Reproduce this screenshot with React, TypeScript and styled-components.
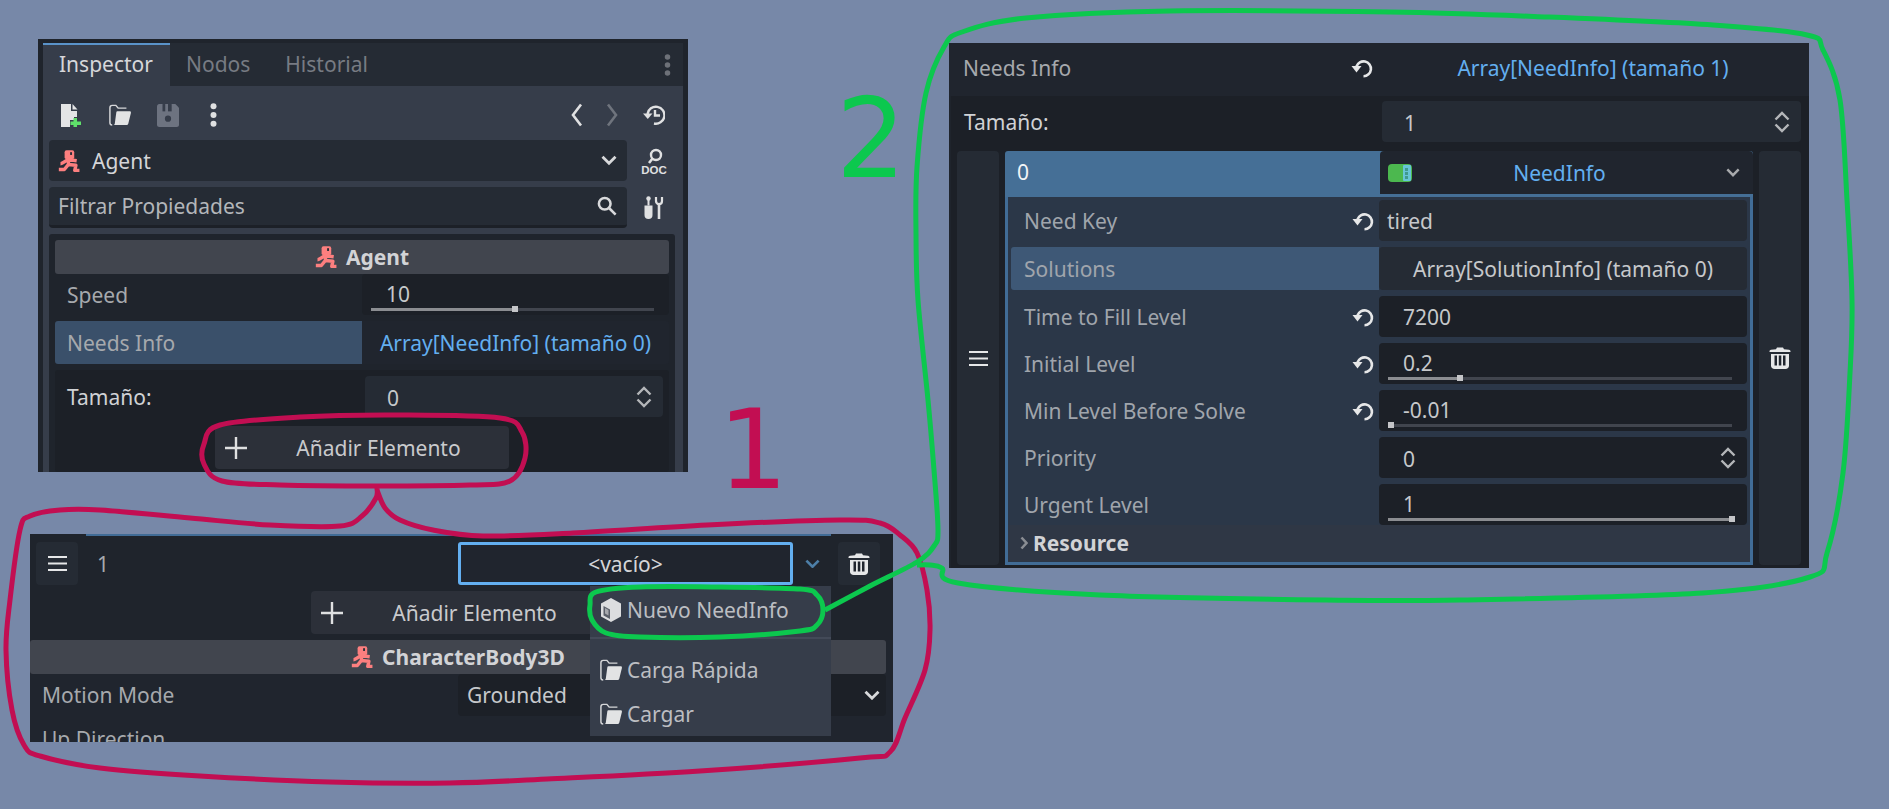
import React from "react";
import styled, { createGlobalStyle } from "styled-components";

const Global = createGlobalStyle`
  html, body { margin: 0; padding: 0; background: #7788a8; }
  * { box-sizing: border-box; }
`;

const Canvas = styled.div`
  position: relative;
  width: 1889px;
  height: 809px;
  overflow: hidden;
  background: #7788a8;
  font-family: "Noto Sans", sans-serif;
  font-size: 21px;
  color: #d4d5d8;
`;

const Window = styled.section<{ $x: number; $y: number; $w: number; $h: number }>`
  position: absolute;
  left: ${(p) => p.$x}px;
  top: ${(p) => p.$y}px;
  width: ${(p) => p.$w}px;
  height: ${(p) => p.$h}px;
  overflow: hidden;
  background: #1f242c;
`;

/* ---------- inspector dock ---------- */
const Dock = styled.div`
  margin: 4px 5px 0;
  height: 429px;
  display: flex;
  flex-direction: column;
  background: #363d4a;
  border-radius: 3px 3px 0 0;
`;
const TabBar = styled.div`
  height: 43px;
  display: flex;
  align-items: stretch;
  background: #252b34;
  padding-right: 12px;
`;
const Tab = styled.div<{ $active?: boolean }>`
  padding: 0 ${(p) => (p.$active ? 17 : 19)}px 3px 16px;
  display: flex;
  align-items: center;
  background: ${(p) => (p.$active ? "#363d4a" : "transparent")};
  border-top: 2px solid ${(p) => (p.$active ? "#5a93c9" : "transparent")};
  color: ${(p) => (p.$active ? "#d6d7da" : "#777b83")};
`;
const Spacer = styled.div`
  flex: 1;
`;
const KebabSlot = styled.div`
  display: flex;
  align-items: center;
  color: #7f838a;
`;
const Toolbar = styled.div`
  height: 54px;
  display: flex;
  align-items: center;
  padding: 4px 18px 0 18px;
`;
const ToolIcon = styled.div<{ $w?: number; $ml?: number }>`
  width: ${(p) => p.$w ?? 48}px;
  margin-left: ${(p) => p.$ml ?? 0}px;
  display: flex;
  justify-content: flex-start;
  align-items: center;
`;
const InputRow = styled.div`
  display: grid;
  grid-template-columns: 578px 54px;
  padding-left: 6px;
  margin-bottom: 6px;
  height: 41px;
`;
const Drop = styled.div<{ $sunken?: boolean }>`
  display: flex;
  align-items: center;
  gap: 12px;
  padding: 0 10px 0 9px;
  background: #252b34;
  border-radius: 4px;
  border-bottom: ${(p) => (p.$sunken ? "3px solid #1c2027" : "0")};
  color: ${(p) => (p.$sunken ? "#b3b6ba" : "#d4d5d8")};
`;
const SideIcon = styled.div`
  display: flex;
  align-items: center;
  justify-content: center;
`;
const SectionBox = styled.div`
  margin-left: 6px;
  width: 626px;
  padding: 6px 6px 0;
  background: #1f242c;
  flex: 1;
  border-radius: 3px 3px 0 0;
`;
const ClassHeader = styled.div<{ $w?: number; $mt?: number }>`
  height: 34px;
  width: ${(p) => (p.$w ? `${p.$w}px` : "auto")};
  margin-top: ${(p) => p.$mt ?? 0}px;
  display: flex;
  justify-content: center;
  align-items: center;
  gap: 9px;
  background: #41454e;
  border-radius: 3px;
  font-weight: 700;
  color: #d2d3d6;
`;
const PropRow = styled.div<{ $hl?: boolean; $mb?: number }>`
  display: grid;
  grid-template-columns: 307px 307px;
  height: ${(p) => (p.$hl ? 43 : 41)}px;
  margin-bottom: ${(p) => p.$mb ?? 6}px;
`;
const PropLabel = styled.div<{ $hl?: boolean }>`
  display: flex;
  align-items: center;
  padding-left: 12px;
  color: #a6a9ad;
  border-radius: 3px 0 0 3px;
  background: ${(p) => (p.$hl ? "#3a506a" : "transparent")};
`;
const SliderField = styled.div<{ $ml?: number; $mr?: number }>`
  background: #1c2027;
  border-radius: 4px;
  height: 41px;
  display: flex;
  flex-direction: column;
  padding-left: ${(p) => p.$ml ?? 9}px;
  padding-right: ${(p) => p.$mr ?? 15}px;
`;
const SliderValue = styled.div<{ $pad?: number }>`
  height: 33px;
  line-height: 40px;
  padding-left: ${(p) => p.$pad ?? 15}px;
  color: #c6c8cb;
`;
const Track = styled.div`
  position: relative;
  height: 3px;
  margin-top: 1px;
  background: #41454e;
`;
const TrackFill = styled.div<{ $pct: number }>`
  position: absolute;
  left: 0;
  top: 0;
  bottom: 0;
  width: ${(p) => p.$pct}%;
  background: #8b8d91;
`;
const Thumb = styled.div<{ $pct: number }>`
  position: absolute;
  left: ${(p) => p.$pct}%;
  top: -2px;
  width: 6px;
  height: 6px;
  margin-left: -3px;
  background: #c4c5c8;
`;
const LinkValue = styled.div`
  display: flex;
  align-items: center;
  justify-content: center;
  color: #63aff0;
  background: #20252e;
  border-radius: 0 3px 3px 0;
`;
const SubPanel = styled.div`
  height: 102px;
  background: #1c2027;
  border-radius: 3px;
  padding: 6px 6px 0 0;
`;
const SizeRow = styled.div<{ $col: number }>`
  display: grid;
  grid-template-columns: ${(p) => p.$col}px 1fr;
  height: 41px;
`;
const SizeLabel = styled.div<{ $pl: number }>`
  display: flex;
  align-items: center;
  padding-left: ${(p) => p.$pl}px;
  color: #d0d2d5;
`;
const Spin = styled.div<{ $pl?: number; $bg?: string }>`
  display: flex;
  align-items: center;
  justify-content: space-between;
  padding: 0 11px 0 ${(p) => p.$pl ?? 22}px;
  border-radius: 4px;
  background: ${(p) => p.$bg ?? "#252b34"};
  color: #c6c8cb;
  span {
    padding-top: 2px;
  }
`;
const AddWrap = styled.div<{ $pl: number; $mt: number }>`
  padding-left: ${(p) => p.$pl}px;
  margin-top: ${(p) => p.$mt}px;
`;
const AddButton = styled.div`
  width: 294px;
  height: 43px;
  display: grid;
  grid-template-columns: 32px 1fr;
  align-items: center;
  padding-left: 10px;
  background: #2c3039;
  border-radius: 4px;
  color: #c9cacd;
  text-align: center;
  span {
    padding-right: 9px;
  }
`;

/* ---------- second crop ---------- */
const ListTopLine = styled.div`
  height: 2px;
  margin: 0 62px 6px 56px;
  background: #416c96;
`;
const ElementRow = styled.div`
  display: grid;
  grid-template-columns: 42px 380px 335px 38px 49px;
  height: 43px;
  margin-left: 6px;
`;
const Handle = styled.div`
  display: flex;
  align-items: center;
  justify-content: center;
  background: #252b34;
  border-radius: 4px;
`;
const IndexLabel = styled.div`
  display: flex;
  align-items: center;
  padding-left: 19px;
  color: #a6a9ad;
`;
const EmptyPick = styled.div`
  display: flex;
  align-items: center;
  justify-content: center;
  background: #20252e;
  border: 3px solid #63aff0;
  border-radius: 3px;
  color: #d4d5d8;
`;
const ChevronSlot = styled.div`
  display: flex;
  align-items: center;
  justify-content: center;
  color: #4d7fa8;
`;
const TrashSlot = styled.div`
  margin-left: 7px;
  width: 42px;
  display: flex;
  align-items: center;
  justify-content: center;
  background: #252b34;
  border-radius: 4px;
`;
const MotionRow = styled.div`
  display: grid;
  grid-template-columns: 428px 428px;
  height: 42px;
  background: #20252e;
`;
const MotionLabel = styled.div`
  display: flex;
  align-items: center;
  padding-left: 12px;
  color: #a6a9ad;
`;
const MotionSelect = styled.div`
  display: flex;
  align-items: center;
  justify-content: space-between;
  padding: 0 6px 0 9px;
  background: #1c2027;
  border-radius: 4px;
  color: #c6c8cb;
`;
const UpRow = styled.div`
  padding: 9px 0 0 12px;
  color: #a6a9ad;
  background: #20252e;
  height: 40px;
`;
const CropBody = styled.div`
  background: #20252e;
`;
const Popup = styled.div`
  position: absolute;
  left: 560px;
  top: 52px;
  width: 241px;
  height: 150px;
  background: #363d4a;
  display: flex;
  flex-direction: column;
  color: #bcbec2;
`;
const MenuItem = styled.div<{ $h: number }>`
  height: ${(p) => p.$h}px;
  display: flex;
  align-items: center;
  gap: 5px;
  padding: 0 0 4px 10px;
`;
const MenuSep = styled.div`
  height: 2px;
  background: #434a58;
  margin-bottom: 8px;
`;

/* ---------- third crop ---------- */
const TopRow = styled.div`
  height: 53px;
  display: grid;
  grid-template-columns: 432px 1fr;
  background: #20252e;
  padding-bottom: 3px;
`;
const TopLabel = styled.div`
  display: flex;
  align-items: center;
  justify-content: space-between;
  padding: 0 8px 0 14px;
  color: #a6a9ad;
`;
const TopValue = styled.div`
  display: flex;
  align-items: center;
  justify-content: center;
  padding-right: 4px;
  color: #63aff0;
`;
const TopSub = styled.div`
  margin-left: 2px;
  height: 472px;
  background: #1c2027;
  padding: 5px 8px 0 6px;
`;
const ItemRow = styled.div`
  display: grid;
  grid-template-columns: 42px 748px 42px;
  column-gap: 6px;
  height: 414px;
  margin-top: 9px;
`;
const SideBar = styled.div`
  display: flex;
  align-items: center;
  justify-content: center;
  background: #252b34;
  border-radius: 4px;
`;
const ItemMain = styled.div`
  display: flex;
  flex-direction: column;
`;
const ItemHead = styled.div`
  height: 46px;
  display: grid;
  grid-template-columns: 375px 373px;
  background: #456f96;
  border-radius: 3px 3px 0 0;
`;
const ItemIndex = styled.div`
  display: flex;
  align-items: center;
  padding: 0 0 4px 12px;
  color: #f2f4f6;
`;
const ResPick = styled.div`
  height: 43px;
  display: grid;
  grid-template-columns: 32px 1fr 54px;
  align-items: center;
  padding-left: 8px;
  background: #20252e;
  border-radius: 4px 4px 0 0;
  color: #63aff0;
  text-align: center;
  svg:last-child {
    justify-self: end;
    margin-right: 13px;
  }
`;
const ItemBox = styled.div`
  flex: 1;
  background: #2b3748;
  border: solid #416c96;
  border-width: 0 3px 3px;
  padding-top: 3px;
  display: flex;
  flex-direction: column;
  gap: 6px;
`;
const InnerRow = styled.div<{ $tall?: boolean }>`
  display: grid;
  grid-template-columns: 371px 368px;
  height: ${(p) => (p.$tall ? 43 : 41)}px;
`;
const InnerLabel = styled.div<{ $hl?: boolean }>`
  display: flex;
  align-items: center;
  justify-content: space-between;
  padding: 0 5px 0 ${(p) => (p.$hl ? 13 : 16)}px;
  color: #a0a5ac;
  background: ${(p) => (p.$hl ? "#3e5876" : "transparent")};
  margin-left: ${(p) => (p.$hl ? 3 : 0)}px;
  border-radius: 3px 0 0 3px;
`;
const TextField = styled.div<{ $center?: boolean; $bg?: string }>`
  display: flex;
  align-items: center;
  justify-content: ${(p) => (p.$center ? "center" : "flex-start")};
  padding-left: ${(p) => (p.$center ? 0 : 8)}px;
  background: ${(p) => p.$bg ?? "#252b34"};
  border-radius: 4px;
  color: #c6c8cb;
`;
const NumField = styled(TextField)`
  padding-left: 24px;
  background: #1c2027;
`;
const ResourceBar = styled.div`
  height: 36px;
  margin-top: -6px;
  display: flex;
  align-items: center;
  gap: 5px;
  padding-left: 12px;
  background: #2f3745;
  font-weight: 700;
  color: #d2d3d6;
`;

/* ---------- annotation ---------- */
const Scribble = styled.svg`
  position: absolute;
  inset: 0;
  width: 1889px;
  height: 809px;
  pointer-events: none;
`;
const Numeral = styled.div<{ $x: number; $y: number; $c: string }>`
  position: absolute;
  left: ${(p) => p.$x}px;
  top: ${(p) => p.$y}px;
  font-family: "DejaVu Sans", sans-serif;
  font-size: 110px;
  line-height: 110px;
  color: ${(p) => p.$c};
`;

/* ---------- icons ---------- */
const AgentIcon = ({ s = 22 }: { s?: number }) => (
  <svg width={s} height={s} viewBox="0 0 16 16" fill="none" stroke="#fc7f7f" strokeWidth="2.5" strokeLinejoin="round">
    <rect x="4.8" y="0.2" width="7" height="6.4" rx="1.4" fill="#fc7f7f" stroke="none" />
    <rect x="8.8" y="1.6" width="1.4" height="2" fill="#2a2f38" stroke="none" />
    <path d="M7.600 5v5.500M1.800 10c2 0 3-2 5.800-3l6 .8M7.600 10.500l-3 3.700H.6M7.600 10.500l5.400.6-.8 3.700h3.400" />
  </svg>
);
const NewFileIcon = () => (
  <svg width="22" height="23" viewBox="0 0 22 23">
    <path d="M0 0h10v7h6v6h-3v3H9v7H0z" fill="#e4e5e6" />
    <path d="M11.500 0 16.500 5.500h-5z" fill="#e4e5e6" />
    <path d="M12.500 14h3.500v3.500h4V21h-4v2h-3.500v-2h-3v-3.500h3z" fill="#5fe06a" />
  </svg>
);
const FolderIcon = ({ s = 22 }: { s?: number }) => (
  <svg width={s} height={s} viewBox="0 0 24 24">
    <path d="M3.500 23C2 23 1 22 1 20.500V4C1 2.500 2 1.500 3.500 1.500h4l2.500 3h9" fill="none" stroke="#d6d7d9" strokeWidth="1.600" />
    <path d="M9 8h13.500c1 0 1.600.8 1.400 1.700L21 21.500c-.3 1-1 1.500-2 1.500H4.500c1 0 1.600-.6 1.800-1.500L8 9c.1-.6.5-1 1-1z" fill="#e2e3e4" />
  </svg>
);
const SaveIcon = () => (
  <svg width="22" height="23" viewBox="0 0 24 25">
    <path d="M2.500 0H20L24 4V22.500c0 1.400-1.100 2.500-2.500 2.500h-19C1.100 25 0 23.900 0 22.500V2.500C0 1.100 1.100 0 2.500 0z" fill="#6d7380" />
    <rect x="6" y="0" width="3" height="8" fill="#363d4a" />
    <rect x="12" y="0" width="4" height="8" fill="#363d4a" />
    <circle cx="12" cy="16" r="3.400" fill="#363d4a" />
  </svg>
);
const Kebab = ({ c = "#e0e1e2", h = 24 }: { c?: string; h?: number }) => (
  <svg width="7" height={h} viewBox="0 0 7 24" fill={c}>
    <circle cx="3.500" cy="3.200" r="3" />
    <circle cx="3.500" cy="12" r="3" />
    <circle cx="3.500" cy="20.800" r="3" />
  </svg>
);
const ArrowLeft = () => (
  <svg width="14" height="24" viewBox="0 0 14 24" fill="none" stroke="#e0e1e2" strokeWidth="2.600">
    <path d="M11 1.500 3 12l8 10.500" />
  </svg>
);
const ArrowRight = () => (
  <svg width="14" height="24" viewBox="0 0 14 24" fill="none" stroke="#6f747d" strokeWidth="2.600">
    <path d="M3 1.500 11 12l-8 10.500" />
  </svg>
);
const HistoryIcon = () => (
  <svg width="22" height="20" viewBox="0 0 22 20" fill="none" stroke="#e0e1e2" strokeWidth="2.400">
    <path d="M4.500 9A8.500 8.500 0 1 1 11 18.500" />
    <path d="M12 5v5.500h5" />
    <path d="M0 8.500h9.500l-4.750 5.500z" fill="#e0e1e2" stroke="none" />
  </svg>
);
const DocIcon = () => (
  <svg width="26" height="26" viewBox="0 0 26 26" fill="none">
    <circle cx="15" cy="7" r="5" stroke="#e0e1e2" strokeWidth="2.400" />
    <path d="M11.500 10.500 8 15" stroke="#e0e1e2" strokeWidth="2.600" />
    <text x="13" y="25.500" textAnchor="middle" fontFamily="Liberation Sans" fontWeight="700" fontSize="11.500" fill="#e0e1e2">DOC</text>
  </svg>
);
const SearchIcon = () => (
  <svg width="20" height="20" viewBox="0 0 22 22" fill="none" stroke="#d8d9db" strokeWidth="2.800">
    <circle cx="8.500" cy="8.500" r="6.400" />
    <path d="M13.500 13.500 20.500 20.500" />
  </svg>
);
const ToolsIcon = () => (
  <svg width="20" height="23" viewBox="0 0 20 23">
    <circle cx="4.500" cy="2.500" r="2.200" fill="#e0e1e2" />
    <path d="M3.500 3.500h2v6h-2z" fill="#e0e1e2" />
    <path d="M0.500 9.500h8V19a4 4 0 0 1-8 0z" fill="#e0e1e2" />
    <path d="M12 1v4c0 2 1.300 3.200 3 3.200S18 7 18 5V1" fill="none" stroke="#e0e1e2" strokeWidth="2.200" />
    <path d="M13.700 7.500h2.600V23h-2.600z" fill="#e0e1e2" />
  </svg>
);
const DownChevron = ({ c = "#d8d9db", w = 16 }: { c?: string; w?: number }) => (
  <svg width={w} height={w * 0.65} viewBox="0 0 16 10" fill="none" stroke={c} strokeWidth="2.800">
    <path d="M1.500 1.500 8 8l6.500-6.500" />
  </svg>
);
const SpinIcon = () => (
  <svg width="16" height="22" viewBox="0 0 16 22" fill="none" stroke="#b4b6b9" strokeWidth="2.400">
    <path d="M1.500 8.500 8 2l6.500 6.500M1.500 13.500 8 20l6.500-6.500" />
  </svg>
);
const PlusIcon = () => (
  <svg width="22" height="22" viewBox="0 0 22 22" stroke="#dfe0e1" strokeWidth="2.400">
    <path d="M11 0v22M0 11h22" />
  </svg>
);
const Burger = () => (
  <svg width="19" height="15" viewBox="0 0 19 15" stroke="#e6e7e8" strokeWidth="2">
    <path d="M0 1h19M0 7.500h19M0 14h19" />
  </svg>
);
const TrashIcon = () => (
  <svg width="22" height="22" viewBox="0 0 22 22">
    <path d="M0.500 4.500c0-1 .7-1.600 1.500-1.700L7 2.200 8 .5h6l1 1.700 5 .6c.8.100 1.500.7 1.500 1.700v.5H.500z" fill="#e6e7e8" />
    <path d="M2 7h18v11.500c0 2-1.500 3.500-3.500 3.500h-11C3.500 22 2 20.500 2 18.500z" fill="#e6e7e8" />
    <path d="M5.500 8.500h2.500v10H5.500zM9.800 8.500h2.500v10H9.800zM14 8.500h2.500v10H14z" fill="#20252e" />
  </svg>
);
const ResetIcon = () => (
  <svg width="22" height="20" viewBox="0 0 22 20" fill="none" stroke="#e6e7e8" strokeWidth="2.600">
    <path d="M5.500 8.500A7.400 7.400 0 1 1 12.500 18.200" />
    <path d="M0.500 8h10l-5 6.500z" fill="#e6e7e8" stroke="none" />
  </svg>
);
const CubeIcon = () => (
  <svg width="22" height="24" viewBox="0 0 22 24">
    <path d="M11 0l10 5.500v13L11 24 1 18.500v-13z" fill="#dcdddf" />
    <path d="M3.500 8 10 11.500V21l-6.500-3.500z" fill="#5a5f69" />
    <path d="M5 10l3.500 2v5.500L5 15.500z" fill="#a6a8ad" />
  </svg>
);
const ResIcon = () => (
  <svg width="24" height="18" viewBox="0 0 24 18">
    <rect x="0" y="0" width="24" height="18" rx="4" fill="#4cb84f" />
    <rect x="15" y="1" width="8" height="16" rx="1" fill="#67c5d6" />
    <rect x="17" y="4" width="3" height="3" fill="#3f9a8e" />
    <rect x="17" y="8" width="3" height="3" fill="#3f9a8e" />
    <rect x="17" y="12" width="3" height="3" fill="#3f9a8e" />
  </svg>
);
const Caret = () => (
  <svg width="8" height="14" viewBox="0 0 8 14" fill="none" stroke="#8a8d93" strokeWidth="2.600">
    <path d="M1.500 1.500 6.500 7l-5 5.500" />
  </svg>
);

/* smooth pen stroke through hand-traced points */
type P = [number, number];
const smooth = (pts: P[], close = false) => {
  const at = (i: number): P =>
    close ? pts[(i + pts.length) % pts.length] : pts[Math.max(0, Math.min(pts.length - 1, i))];
  const n = close ? pts.length : pts.length - 1;
  let d = `M${pts[0][0]} ${pts[0][1]}`;
  for (let i = 0; i < n; i++) {
    const [p0, p1, p2, p3] = [at(i - 1), at(i), at(i + 1), at(i + 2)];
    const c1 = [p1[0] + (p2[0] - p0[0]) / 6, p1[1] + (p2[1] - p0[1]) / 6];
    const c2 = [p2[0] - (p3[0] - p1[0]) / 6, p2[1] - (p3[1] - p1[1]) / 6];
    d += `C${c1[0].toFixed(1)} ${c1[1].toFixed(1)} ${c2[0].toFixed(1)} ${c2[1].toFixed(1)} ${p2[0]} ${p2[1]}`;
  }
  return d + (close ? "Z" : "");
};

const RED = "#c20e52";
const GREEN = "#0cc84e";

const redOval = smooth(
  [[204, 444], [220, 425], [300, 417], [400, 415], [500, 418], [522, 432], [525, 458], [510, 481], [470, 485], [377, 486], [280, 485], [222, 481], [204, 464]],
  true
);
const redBig = smooth([
  [377, 488], [376, 498], [362, 516], [340, 526], [270, 525], [190, 518], [100, 510], [60, 510], [30, 516], [20, 530], [10, 600], [6, 650], [12, 710], [24, 745], [40, 756], [100, 768], [200, 776], [330, 782], [450, 783], [547, 779], [700, 771], [860, 758], [890, 752], [905, 718], [925, 670], [930, 630], [927, 590], [917, 553], [900, 535], [880, 523], [840, 520], [707, 525], [573, 533], [483, 536], [433, 530], [400, 520], [385, 508], [377, 490],
]);
const greenOval = smooth(
  [[596, 592], [640, 587], [720, 587], [800, 589], [817, 595], [823, 610], [817, 625], [800, 631], [720, 637], [640, 637], [606, 633], [592, 620], [590, 605]],
  true
);
const greenBig = smooth([
  [825, 610], [870, 586], [917, 562], [934, 546], [938, 530], [934, 470], [928, 400], [918, 300], [916, 233], [917, 167], [926, 93], [944, 47], [962, 32], [1026, 18], [1169, 11], [1390, 12], [1547, 17], [1713, 25], [1807, 35], [1823, 50], [1840, 100], [1847, 200], [1852, 300], [1850, 373], [1843, 473], [1827, 553], [1810, 577], [1703, 593], [1460, 600], [1326, 600], [1100, 595], [958, 583], [942, 568], [930, 565], [917, 565],
]);

export default function App() {
  return (
    <Canvas>
      <Global />
      <Window $x={38} $y={39} $w={650} $h={433}>
        <Dock>
          <TabBar>
            <Tab $active>Inspector</Tab>
            <Tab>Nodos</Tab>
            <Tab>Historial</Tab>
            <Spacer />
            <KebabSlot>
              <Kebab c="#6d7178" h={22} />
            </KebabSlot>
          </TabBar>
          <Toolbar>
            <ToolIcon><NewFileIcon /></ToolIcon>
            <ToolIcon><FolderIcon /></ToolIcon>
            <ToolIcon><SaveIcon /></ToolIcon>
            <ToolIcon $ml={5}><Kebab /></ToolIcon>
            <Spacer />
            <ToolIcon $w={35}><ArrowLeft /></ToolIcon>
            <ToolIcon $w={38}><ArrowRight /></ToolIcon>
            <ToolIcon $w={22}><HistoryIcon /></ToolIcon>
          </Toolbar>
          <InputRow>
            <Drop>
              <AgentIcon />
              Agent
              <Spacer />
              <DownChevron />
            </Drop>
            <SideIcon><DocIcon /></SideIcon>
          </InputRow>
          <InputRow>
            <Drop $sunken>
              Filtrar Propiedades
              <Spacer />
              <SearchIcon />
            </Drop>
            <SideIcon><ToolsIcon /></SideIcon>
          </InputRow>
          <SectionBox>
            <ClassHeader>
              <AgentIcon />
              Agent
            </ClassHeader>
            <PropRow>
              <PropLabel>Speed</PropLabel>
              <SliderField>
                <SliderValue>10</SliderValue>
                <Track>
                  <TrackFill $pct={51} />
                  <Thumb $pct={51} />
                </Track>
              </SliderField>
            </PropRow>
            <PropRow $hl>
              <PropLabel $hl>Needs Info</PropLabel>
              <LinkValue>Array[NeedInfo] (tamaño 0)</LinkValue>
            </PropRow>
            <SubPanel>
              <SizeRow $col={310}>
                <SizeLabel $pl={12}>Tamaño:</SizeLabel>
                <Spin><span>0</span><SpinIcon /></Spin>
              </SizeRow>
              <AddWrap $pl={160} $mt={9}>
                <AddButton><PlusIcon /><span>Añadir Elemento</span></AddButton>
              </AddWrap>
            </SubPanel>
          </SectionBox>
        </Dock>
      </Window>

      <Window $x={30} $y={534} $w={863} $h={208}>
        <ListTopLine />
        <ElementRow>
          <Handle><Burger /></Handle>
          <IndexLabel>1</IndexLabel>
          <EmptyPick>&lt;vacío&gt;</EmptyPick>
          <ChevronSlot><DownChevron c="#4d7fa8" w={15} /></ChevronSlot>
          <TrashSlot><TrashIcon /></TrashSlot>
        </ElementRow>
        <AddWrap $pl={281} $mt={6}>
          <AddButton><PlusIcon /><span>Añadir Elemento</span></AddButton>
        </AddWrap>
        <CropBody>
          <ClassHeader $mt={6} $w={856}>
            <AgentIcon />
            CharacterBody3D
          </ClassHeader>
          <MotionRow>
            <MotionLabel>Motion Mode</MotionLabel>
            <MotionSelect>Grounded<DownChevron /></MotionSelect>
          </MotionRow>
          <UpRow>Up Direction</UpRow>
        </CropBody>
        <Popup>
          <MenuItem $h={51}><CubeIcon />Nuevo NeedInfo</MenuItem>
          <MenuSep />
          <MenuItem $h={50}><FolderIcon />Carga Rápida</MenuItem>
          <MenuItem $h={37}><FolderIcon />Cargar</MenuItem>
        </Popup>
      </Window>

      <Window $x={949} $y={43} $w={860} $h={525}>
        <TopRow>
          <TopLabel>Needs Info<ResetIcon /></TopLabel>
          <TopValue>Array[NeedInfo] (tamaño 1)</TopValue>
        </TopRow>
        <TopSub>
          <SizeRow $col={425}>
            <SizeLabel $pl={7}>Tamaño:</SizeLabel>
            <Spin><span>1</span><SpinIcon /></Spin>
          </SizeRow>
          <ItemRow>
            <SideBar><Burger /></SideBar>
            <ItemMain>
              <ItemHead>
                <ItemIndex>0</ItemIndex>
                <ResPick><ResIcon /><span>NeedInfo</span><DownChevron c="#a8aaad" w={14} /></ResPick>
              </ItemHead>
              <ItemBox>
                <InnerRow>
                  <InnerLabel>Need Key<ResetIcon /></InnerLabel>
                  <TextField>tired</TextField>
                </InnerRow>
                <InnerRow $tall>
                  <InnerLabel $hl>Solutions</InnerLabel>
                  <TextField $center>Array[SolutionInfo] (tamaño 0)</TextField>
                </InnerRow>
                <InnerRow>
                  <InnerLabel>Time to Fill Level<ResetIcon /></InnerLabel>
                  <NumField>7200</NumField>
                </InnerRow>
                <InnerRow>
                  <InnerLabel>Initial Level<ResetIcon /></InnerLabel>
                  <SliderField><SliderValue>0.2</SliderValue><Track><TrackFill $pct={21} /><Thumb $pct={21} /></Track></SliderField>
                </InnerRow>
                <InnerRow>
                  <InnerLabel>Min Level Before Solve<ResetIcon /></InnerLabel>
                  <SliderField><SliderValue>-0.01</SliderValue><Track><TrackFill $pct={0} /><Thumb $pct={1} /></Track></SliderField>
                </InnerRow>
                <InnerRow>
                  <InnerLabel>Priority</InnerLabel>
                  <Spin $bg="#1c2027" $pl={24}><span>0</span><SpinIcon /></Spin>
                </InnerRow>
                <InnerRow>
                  <InnerLabel>Urgent Level</InnerLabel>
                  <SliderField><SliderValue>1</SliderValue><Track><TrackFill $pct={100} /><Thumb $pct={100} /></Track></SliderField>
                </InnerRow>
                <ResourceBar><Caret />Resource</ResourceBar>
              </ItemBox>
            </ItemMain>
            <SideBar><TrashIcon /></SideBar>
          </ItemRow>
        </TopSub>
      </Window>

      <Scribble viewBox="0 0 1889 809" fill="none" strokeWidth="5">
        <path d={redOval} stroke={RED} />
        <path d={redBig} stroke={RED} />
        <path d={greenOval} stroke={GREEN} />
        <path d={greenBig} stroke={GREEN} />
      </Scribble>
      <Numeral $x={718} $y={395} $c={RED}>1</Numeral>
      <Numeral $x={836} $y={84} $c={GREEN}>2</Numeral>
    </Canvas>
  );
}
